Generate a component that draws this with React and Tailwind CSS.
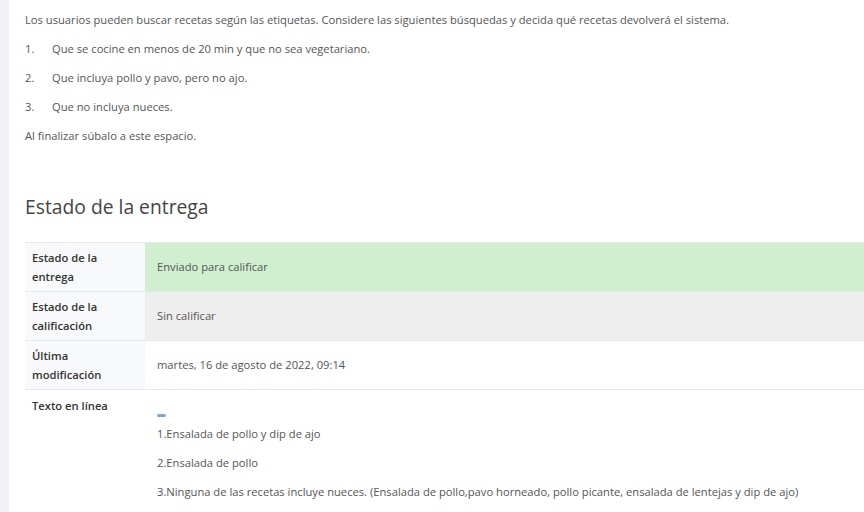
const ROWS = [
  { label: ['Estado de la', 'entrega'], value: 'Enviado para calificar', bg: 'bg-[#cfefcf]' },
  { label: ['Estado de la', 'calificación'], value: 'Sin calificar', bg: 'bg-[#eeeeee]' },
  { label: ['Última', 'modificación'], value: 'martes, 16 de agosto de 2022, 09:14', bg: 'bg-white' },
];

const ITEMS = [
  'Que se cocine en menos de 20 min y que no sea vegetariano.',
  'Que incluya pollo y pavo, pero no ajo.',
  'Que no incluya nueces.',
];

const ANSWERS = [
  '1.Ensalada de pollo y dip de ajo',
  '2.Ensalada de pollo',
  '3.Ninguna de las recetas incluye nueces. (Ensalada de pollo,pavo horneado, pollo picante, ensalada de lentejas y dip de ajo)',
];

export default function App() {
  return (
    <div className="flex w-[864px] h-[512px] overflow-hidden bg-white text-[11.2px] leading-[19.5px] text-[#555]" style={{ fontFamily: '"Open Sans", "Liberation Sans", sans-serif' }}>
      <div className="w-[9px] shrink-0 bg-[#f0f2f5]" />
      <div className="flex-1 pl-4 pt-[10px]">
        <p className="mb-[9.5px]">
          Los usuarios pueden buscar recetas según las etiquetas. Considere las siguientes búsquedas y decida qué recetas devolverá el sistema.
        </p>
        {ITEMS.map((item, i) => (
          <div key={i} className="flex mb-[9.5px]">
            <span className="w-[27px] shrink-0">{i + 1}.</span>
            <span>{item}</span>
          </div>
        ))}
        <p>Al finalizar súbalo a este espacio.</p>

        <h3 className="mt-[48px] mb-[23px] text-[19.3px] leading-[25px] text-[#444]">Estado de la entrega</h3>

        <div>
          {ROWS.map((row, i) => (
            <div key={i} className="flex h-[49px] border-t border-[#e6e8eb]">
              <div className="w-[120px] shrink-0 bg-[#f8f9fa] px-[7px] flex flex-col justify-center font-semibold text-[#333] leading-[19px]">
                <span>{row.label[0]}</span>
                <span>{row.label[1]}</span>
              </div>
              <div className={`flex-1 flex items-center pl-3 ${row.bg}`}>{row.value}</div>
            </div>
          ))}
          <div className="flex border-t border-[#e6e8eb]">
            <div className="w-[120px] shrink-0 px-[7px] pt-[6px] font-semibold text-[#333]">Texto en línea</div>
            <div className="flex-1 pl-3 pt-[24px]">
              <div className="w-[9px] h-[3px] rounded-sm bg-[#7fa8d6]" />
              <div className="mt-[7px]">
                {ANSWERS.map((a, i) => (
                  <p key={i} className="mb-[9.5px] whitespace-nowrap">{a}</p>
                ))}
              </div>
            </div>
          </div>
        </div>
      </div>
    </div>
  );
}
